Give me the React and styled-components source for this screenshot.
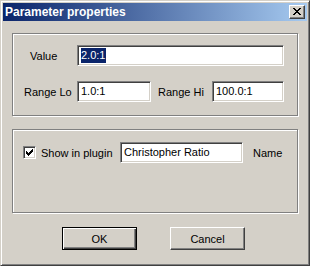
import React from 'react';
import styled, { createGlobalStyle } from 'styled-components';

const GlobalStyle = createGlobalStyle`
  html, body {
    margin: 0;
    padding: 0;
    background: #d4d0c8;
  }
  * {
    box-sizing: border-box;
  }
`;

const Window = styled.div`
  width: 310px;
  height: 266px;
  padding: 2px;
  border: 1px solid;
  border-color: #d4d0c8 #404040 #404040 #d4d0c8;
  box-shadow: inset 1px 1px #fff, inset -1px -1px #808080;
  background: #d4d0c8;
  font-family: 'Liberation Sans', Arial, sans-serif;
  font-size: 11px;
  color: #000;
  display: flex;
  flex-direction: column;
`;

const TitleBar = styled.div`
  height: 18px;
  display: flex;
  align-items: center;
  justify-content: space-between;
  padding: 0 2px 0 2px;
  background: linear-gradient(to right, #0a246a, #a6caf0);
`;

const Title = styled.span`
  color: #fff;
  font-weight: bold;
  font-size: 12px;
`;

const CloseButton = styled.div`
  width: 16px;
  height: 14px;
  background: #d4d0c8;
  border: 1px solid;
  border-color: #fff #404040 #404040 #fff;
  box-shadow: inset -1px -1px #808080;
  svg {
    display: block;
    margin: 2px 0 0 3px;
  }
`;

const Body = styled.div`
  display: flex;
  flex-direction: column;
  padding: 12px 9px 0 9px;
`;

const Group = styled.div`
  height: ${p => p.h}px;
  margin-bottom: ${p => p.mb}px;
  border: 1px solid #808080;
  box-shadow: inset 1px 1px #fff, 1px 1px #fff;
  padding-top: ${p => p.pt}px;
  padding-left: ${p => p.pl}px;
  display: flex;
  flex-direction: column;
  gap: ${p => p.gap || 0}px;
`;

const Row = styled.div`
  display: flex;
  align-items: center;
  height: 21px;
`;

const Label = styled.span`
  width: ${p => p.w}px;
  padding-left: ${p => p.indent || 0}px;
  margin-left: ${p => p.ml || 0}px;
  white-space: nowrap;
`;

const Field = styled.div`
  width: ${p => p.w}px;
  height: 21px;
  background: #fff;
  border: 1px solid;
  border-color: #808080 #fff #fff #808080;
  box-shadow: inset 1px 1px #404040, inset -1px -1px #d4d0c8;
  padding: 2px 0 0 3px;
  line-height: 15px;
  white-space: nowrap;
  overflow: hidden;
`;

const Selected = styled.span`
  background: #0a246a;
  color: #fff;
  padding: 1px 1px 2px 0;
`;

const Check = styled.div`
  width: 13px;
  height: 13px;
  background: #fff;
  border: 1px solid;
  border-color: #808080 #fff #fff #808080;
  box-shadow: inset 1px 1px #404040, inset -1px -1px #d4d0c8;
  margin-right: 5px;
  svg {
    display: block;
    margin: 2px 0 0 2px;
  }
`;

const Buttons = styled.div`
  display: flex;
  justify-content: center;
  gap: 33px;
  margin-top: 14px;
  padding-right: 3px;
`;

const Button = styled.div`
  width: 75px;
  height: 23px;
  display: flex;
  align-items: center;
  justify-content: center;
  background: #d4d0c8;
  border: 1px solid;
  border-color: ${p => (p.primary ? '#000' : '#fff #404040 #404040 #fff')};
  box-shadow: ${p =>
    p.primary
      ? 'inset 1px 1px #fff, inset -1px -1px #404040, inset -2px -2px #808080'
      : 'inset -1px -1px #808080'};
`;

const CloseGlyph = () => (
  <svg width="8" height="7" viewBox="0 0 8 7" shapeRendering="crispEdges">
    <path
      fill="#000"
      d="M0 0h2v1H0zM6 0h2v1H6zM1 1h2v1H1zM5 1h2v1H5zM2 2h4v1H2zM3 3h2v1H3zM2 4h4v1H2zM1 5h2v1H1zM5 5h2v1H5zM0 6h2v1H0zM6 6h2v1H6z"
    />
  </svg>
);

const CheckGlyph = () => (
  <svg width="7" height="7" viewBox="0 0 7 7" shapeRendering="crispEdges">
    <path
      fill="#000"
      d="M6 0h1v1H6zM5 1h2v1H5zM0 2h1v1H0zM4 2h3v1H4zM0 3h2v1H0zM3 3h3v1H3zM0 4h5v1H0zM1 5h3v1H1zM2 6h1v1H2z"
    />
  </svg>
);

export default function App() {
  return (
    <>
      <GlobalStyle />
      <Window>
        <TitleBar>
          <Title>Parameter properties</Title>
          <CloseButton>
            <CloseGlyph />
          </CloseButton>
        </TitleBar>
        <Body>
          <Group h={83} mb={13} pt={11} pl={11} gap={15}>
            <Row>
              <Label w={53} indent={6}>Value</Label>
              <Field w={207}>
                <Selected>2.0:1</Selected>
              </Field>
            </Row>
            <Row>
              <Label w={53}>Range Lo</Label>
              <Field w={74}>1.0:1</Field>
              <Label w={54} ml={7}>Range Hi</Label>
              <Field w={72}>100.0:1</Field>
            </Row>
          </Group>
          <Group h={84} mb={0} pt={12} pl={10}>
            <Row>
              <Check>
                <CheckGlyph />
              </Check>
              <Label w={79}>Show in plugin</Label>
              <Field w={123}>Christopher Ratio</Field>
              <Label w={40} ml={10}>Name</Label>
            </Row>
          </Group>
          <Buttons>
            <Button primary>OK</Button>
            <Button>Cancel</Button>
          </Buttons>
        </Body>
      </Window>
    </>
  );
}
